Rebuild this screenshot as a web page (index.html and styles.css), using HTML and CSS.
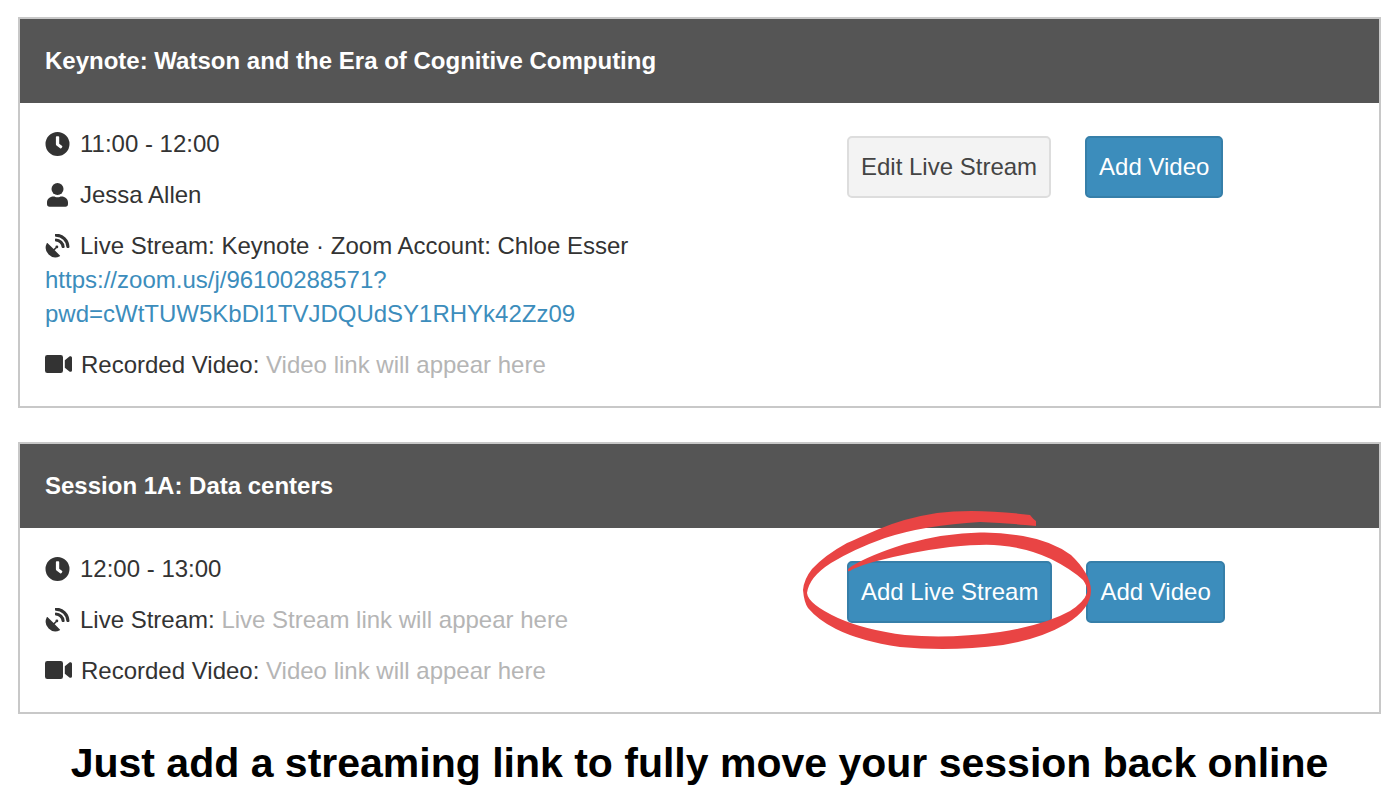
FILE: index.html
```html
<!DOCTYPE html>
<html lang="en">
<head>
<meta charset="utf-8">
<meta name="viewport" content="width=device-width, initial-scale=1">
<title>Sessions</title>
<link rel="stylesheet" href="styles.css">
</head>
<body>
<svg class="sprite" aria-hidden="true">
  <symbol id="clock" viewBox="0 0 24 24"><path fill-rule="evenodd" d="M12 0a12 12 0 1 1 0 24a12 12 0 0 1 0-24zM10.400 5v7.200c0 .5.2.9.6 1.200l3.600 2.800c.5.4 1.100.3 1.500-.2l.5-.7c.4-.5.3-1.100-.2-1.500L13.700 11.700V5c0-.5-.4-.8-.8-.8h-1.700c-.5 0-.8.3-.8.8z"/></symbol>
  <symbol id="user" viewBox="0 0 24 24"><circle cx="12" cy="6" r="6"/><path d="M1.500 21v-1.500c0-3.600 2.900-6 6.500-6c1.500 0 2 .8 4 .8s2.500-.8 4-.8c3.600 0 6.500 2.400 6.500 6V21c0 1.700-1 2.800-2.500 2.800H4c-1.500 0-2.500-1.100-2.500-2.800z"/></symbol>
  <symbol id="dish" viewBox="0 0 24 24"><path d="M1.300 9.300c.2-.4.600-.4.900-.1l5.900 5.900 1.900-1.900a1.400 1.400 0 1 1 1.100 1.100l-1.900 1.900 5.200 5.200c.3.300.3.700-.1.900A9.700 9.700 0 0 1 1.300 9.300z"/><path d="M9.500 .4c0-.5.3-.8.800-.8A13.900 13.900 0 0 1 24 13.100c0 .5-.3.800-.8.800h-1.500c-.5 0-.8-.3-.8-.8A10.700 10.700 0 0 0 10.300 2.700c-.5 0-.8-.3-.8-.8zM9.500 5.300c0-.5.3-.8.800-.8a9 9 0 0 1 8.900 8.600c0 .5-.3.800-.8.800h-1.500c-.5 0-.8-.3-.8-.8a5.900 5.900 0 0 0-5.800-5.500c-.5 0-.8-.3-.8-.8z"/></symbol>
  <symbol id="video" viewBox="0 0 27 24"><path d="M2.300 2h13.400Q18 2 18 4.300v13.400Q18 20 15.700 20H2.300Q0 20 0 17.700V4.300Q0 2 2.300 2zM19.800 7.300l4.600-3.700c1-.8 2.600-.2 2.600 1.200v12.400c0 1.400-1.600 2-2.600 1.200l-4.600-3.700z"/></symbol>
</svg>
<main class="page">
  <section class="card">
    <h2 class="card-title">Keynote: Watson and the Era of Cognitive Computing</h2>
    <div class="card-body">
      <div class="details">
        <p class="row"><svg class="icon"><use href="#clock"/></svg>11:00 - 12:00</p>
        <p class="row"><svg class="icon"><use href="#user"/></svg>Jessa Allen</p>
        <p class="row"><svg class="icon"><use href="#dish"/></svg>Live Stream: Keynote · Zoom Account: Chloe Esser<br><a class="link" href="https://zoom.us/j/96100288571?pwd=cWtTUW5KbDl1TVJDQUdSY1RHYk42Zz09">https://zoom.us/j/96100288571?<wbr>pwd=cWtTUW5KbDl1TVJDQUdSY1RHYk42Zz09</a></p>
        <p class="row"><svg class="icon icon-wide"><use href="#video"/></svg>Recorded Video: <span class="hint">Video link will appear here</span></p>
      </div>
      <div class="actions">
        <button class="btn btn-plain" type="button">Edit Live Stream</button>
        <button class="btn btn-primary" type="button">Add Video</button>
      </div>
    </div>
  </section>
  <section class="card">
    <h2 class="card-title">Session 1A: Data centers</h2>
    <div class="card-body">
      <div class="details">
        <p class="row"><svg class="icon"><use href="#clock"/></svg>12:00 - 13:00</p>
        <p class="row"><svg class="icon"><use href="#dish"/></svg>Live Stream: <span class="hint">Live Stream link will appear here</span></p>
        <p class="row"><svg class="icon icon-wide"><use href="#video"/></svg>Recorded Video: <span class="hint">Video link will appear here</span></p>
      </div>
      <div class="actions">
        <div class="marked">
          <button class="btn btn-primary" type="button">Add Live Stream</button>
          <svg class="scribble" viewBox="800 505 300 150" aria-hidden="true"><path d="M1036 526L1036 521Q1033 519 1030 515Q975 508 937 513Q905 518 879 529Q856 539 847 543Q825 555 812 569Q804 579 803 590Q804 602 808 608Q818 620 836 629Q860 641 900 647Q950 652 1003 645Q1040 639 1066 624Q1091 609 1091 590Q1090 573 1071 555Q1052 541 1023 536Q1000 532 980 532.500Q945 533 905 544Q870 555 852 566Q847 569 848 571Q849 572 853 569Q862 565 873 562Q910 552 950 547Q985 543.500 1000 545.500Q1028 548 1051 559Q1071 569 1083 580Q1088 587 1087 593Q1084 602 1070 611Q1045 625 1000 632Q950 639 905 635Q865 630 838 618Q808 604 807 593Q809 577 831 563Q854 549 885 538Q925 525 980 522Q1004 523 1025 525Z"/></svg>
        </div>
        <button class="btn btn-primary" type="button">Add Video</button>
      </div>
    </div>
  </section>
  <p class="caption">Just add a streaming link to fully move your session back online</p>
</main>
</body>
</html>
```
FILE: styles.css
```css
* { box-sizing: border-box; }

body {
  margin: 0;
  background: #fff;
  color: #333;
  font: 24px/34px "Liberation Sans", Arial, sans-serif;
}

.sprite { position: absolute; width: 0; height: 0; }

.page { padding: 17px 18px 0; }

.card { border: 2px solid #c8c8c8; }

.card + .card { margin-top: 34px; }

.card-title {
  margin: 0;
  padding: 25px;
  background: #555;
  color: #fff;
  font-size: 24px;
  line-height: 34px;
}

.card-body {
  display: grid;
  grid-template-columns: 802fr 507fr;
  padding: 24px 25px;
}

.details {
  display: flex;
  flex-direction: column;
  gap: 17px;
}

.row { margin: 0; }

.icon {
  width: 25px;
  height: 24px;
  margin-right: 10px;
  vertical-align: -4px;
  fill: #333;
  overflow: visible;
}

.icon-wide { width: 27px; margin-right: 9px; }

.link { color: #3c8dbc; text-decoration: none; }

.hint { color: #b5b5b5; }

.actions {
  display: flex;
  align-items: flex-start;
  gap: 34px;
  padding-top: 9px;
}

.btn {
  padding: 13px 12px;
  border: 2px solid;
  border-radius: 5px;
  font: inherit;
  line-height: 32px;
  white-space: nowrap;
}

.btn-plain { background: #f3f3f3; border-color: #ddd; color: #444; }

.btn-primary { background: #3c8dbc; border-color: #367fa9; color: #fff; }

.marked { position: relative; display: flex; }

.scribble {
  position: absolute;
  left: -47px;
  top: -56px;
  width: 300px;
  height: 150px;
  fill: #e94444;
  pointer-events: none;
}

.caption {
  margin: 27px 0 0;
  color: #000;
  font-size: 41px;
  font-weight: bold;
  line-height: 44px;
  text-align: center;
}
```
